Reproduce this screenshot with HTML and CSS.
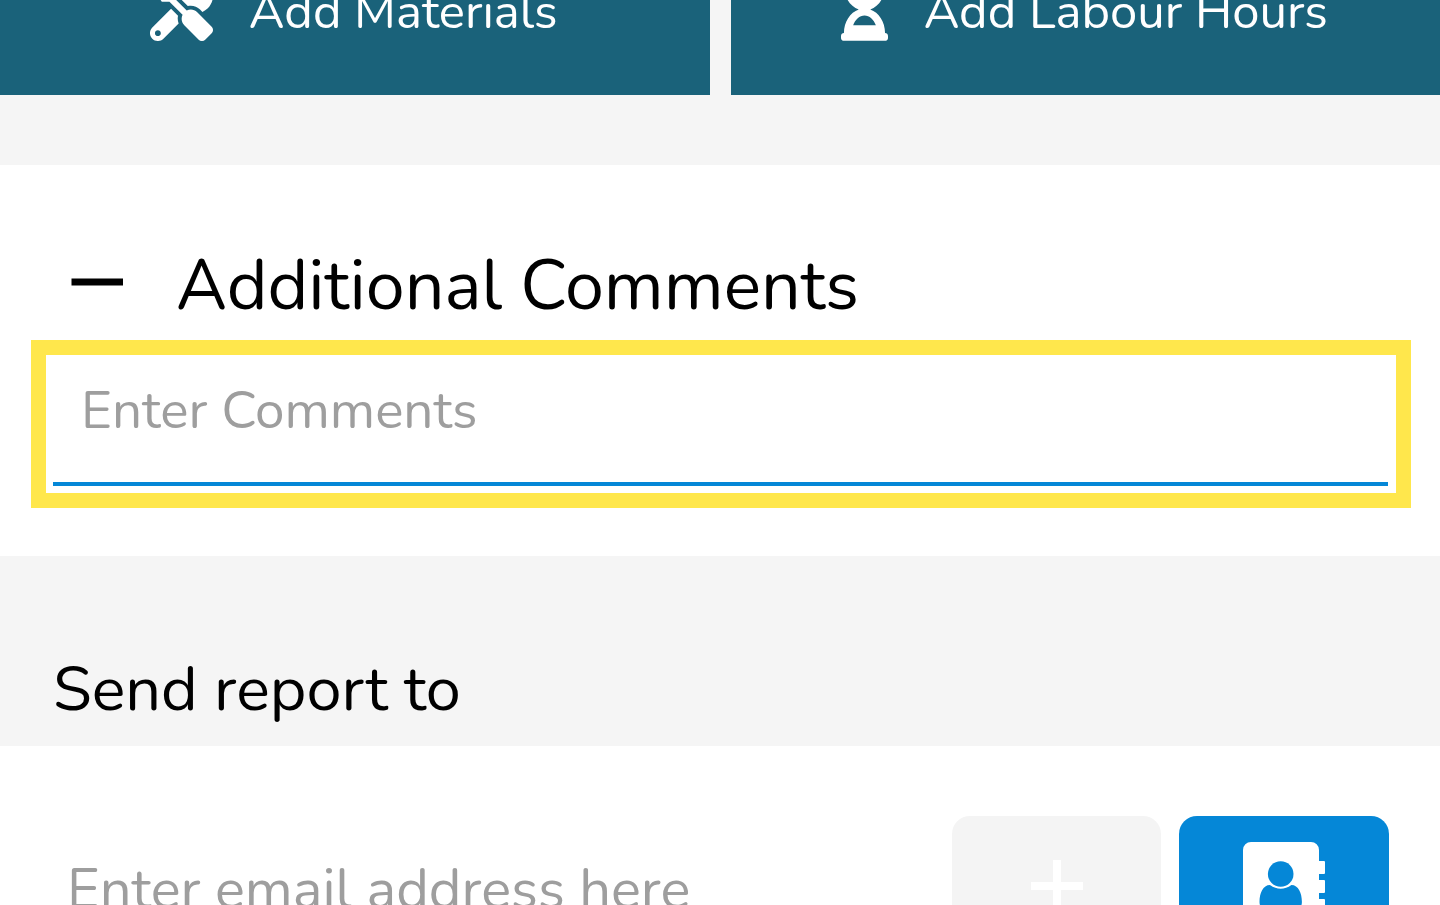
FILE: index.html
```
<!DOCTYPE html>
<html lang="en">

<head>
	<meta charset="UTF-8">
	<meta name="viewport" content="width=device-width, initial-scale=1.0">
	<title>Job Report</title>
	<link rel="stylesheet" href="styles.css">
</head>

<body>

	<div class="actions">
		<button type="button" class="action">
			<svg class="icon-tools" viewBox="0 0 512 512" aria-hidden="true">
				<path fill="currentColor" d="M501.1 395.7L384 278.6c-23.1-23.1-57.6-27.6-85.4-13.9L192 158.1V96L64 0 0 64l96 128h62.1l106.6 106.6c-13.6 27.8-9.2 62.3 13.9 85.4l117.1 117.1c14.6 14.6 38.2 14.6 52.7 0l52.7-52.7c14.5-14.6 14.5-38.2 0-52.7zM331.7 225c28.3 0 54.9 11 74.9 31l19.4 19.4c15.8-6.9 30.8-16.5 43.8-29.5 37.1-37.1 49.7-89.3 37.9-136.7-2.2-9-13.5-12.1-20.1-5.5l-74.4 74.4-67.9-11.3L334 98.9l74.4-74.4c6.6-6.6 3.4-17.9-5.7-20.2-47.4-11.7-99.6.9-136.6 37.9-28.5 28.5-41.9 66.1-41.2 103.6l82.1 82.1c8.1-1.9 16.5-2.9 24.7-2.9zm-103.9 82l-56.7-56.7L18.7 402.8c-25 25-25 65.5 0 90.5s65.5 25 90.5 0l123.6-123.6c-7.6-19.9-9.9-41.6-5-62.7zM64 472c-13.2 0-24-10.8-24-24 0-13.3 10.7-24 24-24s24 10.7 24 24c0 13.2-10.7 24-24 24z" />
			</svg>
			<span>Add Materials</span>
		</button>
		<button type="button" class="action">
			<svg class="icon-hourglass" viewBox="0 0 384 512" aria-hidden="true">
				<path fill="currentColor" d="M360 0H24C10.745 0 0 10.745 0 24v16c0 13.255 10.745 24 24 24 0 90.965 51.016 167.734 120.842 192C75.016 280.266 24 357.035 24 448c-13.255 0-24 10.745-24 24v16c0 13.255 10.745 24 24 24h336c13.255 0 24-10.745 24-24v-16c0-13.255-10.745-24-24-24 0-90.965-51.016-167.734-120.842-192C308.984 231.734 360 154.965 360 64c13.255 0 24-10.745 24-24V24c0-13.255-10.745-24-24-24zm-75.078 384H99.08c17.059-46.797 52.403-80 92.92-80 40.522 0 75.863 33.196 92.922 80zm.019-256H99.078C91.988 108.548 88 86.748 88 64h208c0 22.805-3.987 44.587-11.059 64z" />
			</svg>
			<span>Add Labour Hours</span>
		</button>
	</div>

	<section class="comments">
		<h2 class="comments-title">
			<button type="button" class="toggle" aria-label="Collapse" aria-expanded="true">
				<svg viewBox="0 0 52 52" aria-hidden="true">
					<path fill="currentColor" d="M0.500 18.500h51.500v7H0.500z" />
				</svg>
			</button>
			<label for="comments">Additional Comments</label>
		</h2>
		<div class="highlight">
			<input type="text" id="comments" class="comments-input" placeholder="Enter Comments">
		</div>
	</section>

	<h2 class="send-title"><label for="email">Send report to</label></h2>

	<section class="send">
		<input type="email" id="email" class="email-input" placeholder="Enter email address here">
		<button type="button" class="square" aria-label="Add email">
			<svg class="icon-plus" viewBox="0 0 52 52" aria-hidden="true">
				<path fill="currentColor" d="M22 0h8v22h22v8H30v22h-8V30H0v-8h22z" />
			</svg>
		</button>
		<button type="button" class="square contacts" aria-label="Choose from contacts">
			<svg class="icon-book" viewBox="0 0 82 88" aria-hidden="true">
				<path fill="currentColor" d="M8 0h60a8 8 0 0 1 8 8v11h5a1 1 0 0 1 1 1v11a1 1 0 0 1-1 1h-5v6h5a1 1 0 0 1 1 1v11a1 1 0 0 1-1 1h-5v6h5a1 1 0 0 1 1 1v11a1 1 0 0 1-1 1h-5v10a8 8 0 0 1-8 8H8a8 8 0 0 1-8-8V8a8 8 0 0 1 8-8z" />
				<circle class="person" cx="37.7" cy="32" r="12.8" />
				<path class="person" d="M27 43c7 5 14.400 5 21.400 0 7 0 10.500 8 10.500 17 0 6-4 9-10 9H27c-6 0-10.500-3-10.500-9 0-9 3.500-17 10.500-17z" />
			</svg>
		</button>
	</section>

</body>

</html>
```
FILE: styles.css
```
* {
	box-sizing: border-box;
}

body {
	margin: 0;
	height: 100vh;
	overflow: hidden;
	background-color: #f5f5f5;
	color: #000;
	font-family: Nunito, Lato, sans-serif;
}

button,
input {
	border: 0;
	border-radius: 0;
	padding: 0;
	background: none;
	color: inherit;
	font-family: inherit;
	outline: none;
}

button {
	cursor: pointer;
}

h2 {
	margin: 0;
	font-weight: 400;
}

svg {
	display: block;
	flex: none;
}

/* the row is scrolled partly out of view */
.actions {
	display: flex;
	gap: 21px;
	margin-top: -76px;
}

.action {
	flex: 1;
	display: flex;
	align-items: center;
	justify-content: center;
	gap: 36px;
	height: 171px;
	padding-right: 2px;
	background-color: #1a627a;
	color: #fff;
	font-size: 49px;
}

.action span {
	padding-top: 3px;
}

.icon-tools {
	width: 63px;
	height: 63px;
}

.icon-hourglass {
	width: 47px;
	height: 63px;
}

.comments {
	margin-top: 70px;
	padding: 77px 29px 48px 31px;
	background-color: #fff;
}

.comments-title {
	display: flex;
	align-items: center;
	gap: 53px;
	padding-left: 40px;
	font-size: 70px;
	line-height: 88px;
}

.toggle svg {
	width: 52px;
	height: 52px;
}

.highlight {
	margin-top: 10px;
	padding: 7px 8px 7px 7px;
	border: 15px solid #ffe74c;
}

.comments-input {
	display: block;
	width: 100%;
	height: 124px;
	padding: 0 28px 24px;
	border-bottom: 4px solid #0587d7;
	font-size: 53px;
}

::placeholder {
	color: #9e9e9e;
	opacity: 1;
}

.send-title {
	padding: 93px 53px 17px;
	font-size: 63px;
	line-height: 80px;
}

.send {
	display: flex;
	gap: 18px;
	padding: 70px 51px 70px 67px;
	background-color: #fff;
}

.email-input {
	flex: 1;
	min-width: 0;
	height: 140px;
	padding-top: 7px;
	font-size: 56px;
}

.square {
	display: flex;
	align-items: center;
	justify-content: center;
	width: 209px;
	height: 140px;
	border-radius: 18px;
	background-color: #f4f4f4;
	color: #fff;
}

.contacts {
	width: 210px;
	background-color: #0587d7;
}

.icon-plus {
	width: 52px;
	height: 52px;
}

.icon-book {
	width: 82px;
	height: 88px;
}

.person {
	fill: #0587d7;
}
```
